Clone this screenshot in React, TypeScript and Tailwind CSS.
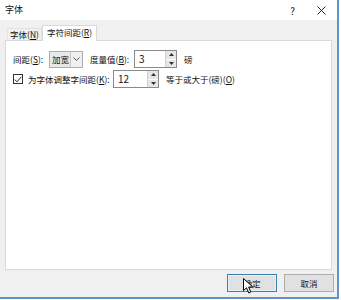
import React from 'react';

const font = { fontFamily: '"Noto Sans CJK SC", "Liberation Sans", sans-serif' };

function Spin({ value, width }: { value: string; width: string }) {
  return (
    <div className={`flex h-[18px] ${width} border border-[#8a8a8a] bg-white`}>
      <div className="flex-1 pl-[4px] text-[10px] leading-[16px] text-[#111]">{value}</div>
      <div className="flex w-[11px] flex-col border-l border-[#cfcfcf]">
        <div className="flex flex-1 items-center justify-center bg-[#e6e6e6]">
          <svg width="5" height="3" viewBox="0 0 5 3"><path d="M2.5 0 L5 3 L0 3 Z" fill="#333" /></svg>
        </div>
        <div className="h-px bg-white" />
        <div className="flex flex-1 items-center justify-center bg-[#e6e6e6]">
          <svg width="5" height="3" viewBox="0 0 5 3"><path d="M0 0 L5 0 L2.5 3 Z" fill="#333" /></svg>
        </div>
      </div>
    </div>
  );
}

export default function App() {
  return (
    <div className="h-[300px] w-[341px] overflow-hidden whitespace-nowrap bg-white" style={font}>
      <div className="flex h-[299px] w-[339px] flex-col border-r-2 border-b-2 border-[#5f93c9] bg-[#f0f0f0]">
        {/* Title bar */}
        <div className="flex h-[20px] items-center bg-white pl-[5px] pr-[8px] text-[9px] text-[#111]">
          <span className="flex-1">字体</span>
          <span className="mr-[22px] text-[10px]">?</span>
          <svg width="9" height="9" viewBox="0 0 9 9" className="mr-[3px]">
            <path d="M0.5 0.5 L8.5 8.5 M8.5 0.5 L0.5 8.5" stroke="#222" strokeWidth="1" />
          </svg>
        </div>

        {/* Tabs */}
        <div className="mt-[5px] flex items-end pl-[7px] text-[8.5px] text-[#111]">
          <div className="flex h-[12px] w-[35px] items-center justify-center border border-b-0 border-[#e3e3e3] bg-[#f0f0f0] leading-none">
            字体(<span className="underline">N</span>)
          </div>
          <div className="relative -mb-px flex h-[16px] w-[55px] items-center justify-center border border-b-0 border-[#d9d9d9] bg-white pb-[2px] leading-none">
            字符间距(<span className="underline">R</span>)
          </div>
        </div>

        {/* Panel */}
        <div className="ml-[5px] mr-[5px] h-[230px] border border-[#d9d9d9] bg-white pl-[7px] pt-[9px] text-[8.5px] text-[#111]">
          <div className="flex h-[18px] items-center">
            <span className="w-[36px]">间距(<span className="underline">S</span>):</span>
            <div className="flex h-[17px] w-[34px] items-center border border-[#adadad] bg-[#e9e9e9]">
              <span className="flex-1 pl-[2px] leading-none">加宽</span>
              <div className="flex h-full w-[12px] items-center justify-center border-l border-[#c8c8c8] bg-[#f0f0f0]">
                <svg width="7" height="4" viewBox="0 0 7 4"><path d="M0.5 0.5 L3.5 3.5 L6.5 0.5" stroke="#555" fill="none" /></svg>
              </div>
            </div>
            <span className="ml-[7px] w-[44px]">度量值(<span className="underline">B</span>):</span>
            <Spin value="3" width="w-[43px]" />
            <span className="ml-[7px]">磅</span>
          </div>

          <div className="mt-[1px] flex h-[20px] items-center">
            <div className="flex h-[10px] w-[10px] items-center justify-center border border-[#333] bg-white">
              <svg width="8" height="7" viewBox="0 0 8 7"><path d="M0.8 3.6 L3 5.8 L7.3 0.8" stroke="#222" strokeWidth="1" fill="none" /></svg>
            </div>
            <span className="ml-[5px] w-[85px]">为字体调整字间距(<span className="underline">K</span>):</span>
            <Spin value="12" width="w-[46px]" />
            <span className="ml-[7px]">等于或大于(磅)(<span className="underline">O</span>)</span>
          </div>
        </div>

        {/* Buttons */}
        <div className="mt-[4px] flex justify-end gap-[7px] pr-[3px] text-[8.5px] text-[#111]">
          <div className="relative flex h-[18px] w-[50px] items-center justify-center border border-[#3c7fb1] bg-[#e1e1e1] shadow-[inset_0_0_0_1px_#e5f1fb]">
            确定
            <svg width="11" height="16" viewBox="0 0 11 16" className="absolute left-[15px] top-[3px]">
              <path d="M0.5 0.5 L0.5 12.5 L3.5 9.8 L5.8 15 L7.8 14 L5.6 9 L9.8 9 Z" fill="#fff" stroke="#000" strokeWidth="1" strokeLinejoin="round" />
            </svg>
          </div>
          <div className="flex h-[18px] w-[50px] items-center justify-center border border-[#adadad] bg-[#e1e1e1]">
            取消
          </div>
        </div>
      </div>
    </div>
  );
}
